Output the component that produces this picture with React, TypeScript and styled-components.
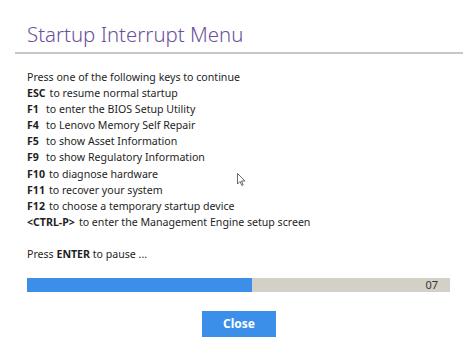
import React from "react";
import styled, { createGlobalStyle } from "styled-components";

const Global = createGlobalStyle`
  html, body { margin: 0; padding: 0; background: #fff; }
  body { width: 474px; height: 348px; overflow: hidden; font-family: "Noto Sans", "Open Sans", sans-serif; }
`;

const Page = styled.div`
  position: relative;
  width: 474px;
  height: 348px;
  box-sizing: border-box;
  padding: 19px 11px 0 15px;
`;

const Title = styled.h1`
  margin: 0 0 0 12px;
  font-weight: 300;
  font-size: 20.4px;
  line-height: 30px;
  color: #6d4f9c;
`;

const Divider = styled.div`
  height: 2px;
  background: #c9c8c1;
  margin-top: 3px;
`;

const Body = styled.div`
  padding: 15px 0 0 12px;
  font-size: 10.6px;
  color: #1e1e1e;
`;

const Line = styled.div`
  height: 16.1px;
  line-height: 16px;
  white-space: nowrap;
`;

const Key = styled.b<{ $w?: number }>`
  display: inline-block;
  font-weight: 700;
  min-width: ${(p) => (p.$w ? `${p.$w}px` : "auto")};
  margin-right: 4px;
`;

const Pause = styled.div`
  margin-top: 16px;
  line-height: 16px;
`;

const Bar = styled.div`
  margin: 16px 13px 0 12px;
  height: 14px;
  background: #d3d0c8;
  display: flex;
  align-items: center;
  justify-content: flex-end;
  position: relative;
`;

const Fill = styled.div`
  position: absolute;
  left: 0;
  top: 0;
  bottom: 0;
  background: #3b8fe8;
`;

const Count = styled.span`
  font-size: 11px;
  color: #333;
  padding-right: 12px;
  position: relative;
`;

const Footer = styled.div`
  display: flex;
  justify-content: center;
  margin-top: 19px;
`;

const CloseBtn = styled.button`
  width: 74px;
  height: 26px;
  border: none;
  background: #3b8fe8;
  color: #fff;
  font-family: "Noto Sans", sans-serif;
  font-weight: 700;
  font-size: 12px;
  cursor: pointer;
`;

const Cursor = styled.svg`
  position: absolute;
  left: 237px;
  top: 173px;
`;

const items: [string, string, number?][] = [
  ["ESC", "to resume normal startup"],
  ["F1", "to enter the BIOS Setup Utility", 15],
  ["F4", "to Lenovo Memory Self Repair", 15],
  ["F5", "to show Asset Information", 15],
  ["F9", "to show Regulatory Information", 15],
  ["F10", "to diagnose hardware"],
  ["F11", "to recover your system"],
  ["F12", "to choose a temporary startup device"],
  ["<CTRL-P>", "to enter the Management Engine setup screen"],
];

export default function App() {
  return (
    <>
      <Global />
      <Page>
        <Title>Startup Interrupt Menu</Title>
        <Divider />
        <Body>
          <Line>Press one of the following keys to continue</Line>
          {items.map(([k, t, w]) => (
            <Line key={k}>
              <Key $w={w}>{k}</Key>
              {t}
            </Line>
          ))}
          <Pause>
            Press <b>ENTER</b> to pause ...
          </Pause>
        </Body>
        <Bar>
          <Fill style={{ width: `${(225 / 423) * 100}%` }} />
          <Count>07</Count>
        </Bar>
        <Footer>
          <CloseBtn>Close</CloseBtn>
        </Footer>
        <Cursor width="9" height="14" viewBox="0 0 9 14">
          <path d="M0.5 0.5 L0.5 11 L3 8.5 L4.8 12.5 L6.2 11.9 L4.5 8 L8 8 Z" fill="#fff" stroke="#444" strokeWidth="0.8" />
        </Cursor>
      </Page>
    </>
  );
}
